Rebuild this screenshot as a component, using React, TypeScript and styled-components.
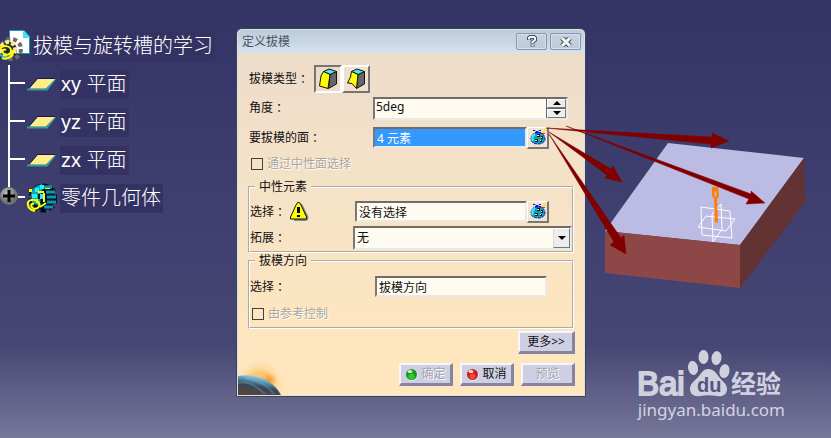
import React from "react";
import styled, { createGlobalStyle, css } from "styled-components";

const GlobalStyle = createGlobalStyle`
  *, *::before, *::after { box-sizing: border-box; }
  body {
    margin: 0;
    font-family: "Noto Sans", "Noto Sans CJK SC", sans-serif;
    font-size: 12px;
    line-height: 16px;
    color: #111;
  }
  button, input, select { font: inherit; color: inherit; margin: 0; }
`;

const Page = styled.main`
  display: grid;
  grid-template-columns: 236px minmax(320px, 350px) minmax(245px, 1fr);
  align-items: start;
  min-height: 100vh;
  overflow: hidden;
  background: linear-gradient(#333366 0%, #424272 60%, #474774 79%, #77779a 100%);
`;

/* ---------- specification tree ---------- */

const Tree = styled.ul`
  list-style: none;
  margin: 0;
  padding: 27px 0 0;
  color: #fff;
  font: 20px/29px "Liberation Sans", "Noto Sans CJK SC", sans-serif;
`;

const TreeRow = styled.li`
  display: flex;
  align-items: center;
  height: 38px;
`;

const TreeLabel = styled.span<{ $root?: boolean }>`
  margin-left: ${(p) => (p.$root ? 2 : 3)}px;
  padding: 0 2px 0 1px;
  border-radius: 2px;
  background: #343263;
  font-weight: 300;
  white-space: nowrap;
`;

const Branch = styled.span`
  display: flex;
  align-items: center;
  flex: none;
  width: 17px;
  height: 38px;
  margin: 0 2px 0 8px;
  border-left: 2px solid #fff;
  &::before {
    content: "";
    width: 100%;
    height: 2px;
    margin-bottom: 3px;
    background: #fff;
  }
`;

const Expander = styled.button`
  display: flex;
  flex-direction: column;
  align-items: center;
  flex: none;
  width: 18px;
  height: 38px;
  padding: 0;
  border: 0;
  background: none;
  &::before {
    content: "";
    width: 2px;
    height: 8px;
    background: #fff;
  }
`;

const ShortStub = styled.span`
  flex: none;
  width: 7px;
  height: 2px;
  margin: 0 1px 3px 0;
  background: #fff;
`;

/* ---------- dialog ---------- */

const Dialog = styled.section`
  margin-top: 28px;
  border: 1px solid #3f444c;
  border-radius: 6px 6px 0 0;
  background: #d6e3ef;
  padding: 1px;
`;

const TitleBar = styled.header`
  display: flex;
  align-items: center;
  height: 23px;
  padding: 0 3px 0 4px;
  gap: 3px;
  border-radius: 5px 5px 0 0;
  background: linear-gradient(#bccbdb, #d5e2ee);
`;

const Title = styled.h1`
  flex: 1;
  margin: 0;
  font-size: 12px;
  font-weight: 400;
  color: #4c545e;
`;

const CaptionButton = styled.button`
  display: grid;
  place-items: center;
  width: 31px;
  height: 17px;
  padding: 0;
  border: 1px solid #8796ab;
  border-radius: 2px;
  background: linear-gradient(#c5d2e1, #bccada);
  box-shadow: inset 0 0 0 1px #d3dfea;
`;

const Body = styled.form`
  padding: 12px 0 0;
  background: linear-gradient(#eedccb 0%, #f4e2c8 35%, #fce5c0 75%, #ffe6bd 100%);
`;

const Row = styled.div<{ $h: number; $inset?: boolean }>`
  display: flex;
  align-items: center;
  height: ${(p) => p.$h}px;
  padding: 0 ${(p) => (p.$inset ? 0 : 10)}px 0 ${(p) => (p.$inset ? 0 : 11)}px;
`;

const Caption = styled.label<{ $w: number }>`
  flex: none;
  display: flex;
  align-items: center;
  width: ${(p) => p.$w}px;
  white-space: nowrap;
  svg { margin-left: 4px; }
`;

const Colon = styled.span`
  font-family: "Noto Sans CJK TC", sans-serif;
`;

const TypeButton = styled.button<{ $on?: boolean }>`
  display: grid;
  place-items: center;
  width: 28px;
  height: 28px;
  padding: 0;
  border: 2px solid;
  border-color: ${(p) => (p.$on ? "#77736e #fff #fff #77736e" : "#fff #77736e #77736e #fff")};
  background: ${(p) => (p.$on ? "#ecdccb" : "#f0e0d0")};
`;

const sunken = css`
  border: 2px solid;
  border-color: #6f6d6b #ece9e4 #ece9e4 #7a7876;
  border-radius: 0;
  background: #fffbf0;
  outline: 0;
`;

const TextField = styled.input<{ $picked?: boolean }>`
  ${sunken}
  width: 154px;
  height: 21px;
  padding: 0 0 0 2px;
  ${(p) => p.$picked && css`background: #3399ff; color: #fff;`}
`;

const WideField = styled(TextField)`
  width: 172px;
`;

const Spin = styled.div`
  ${sunken}
  display: flex;
  width: 195px;
  height: 23px;
  input {
    flex: 1;
    min-width: 0;
    padding: 0 0 2px 1px;
    border: 0;
    outline: 0;
    background: none;
    font-size: 12px;
  }
`;

const SpinButtons = styled.div`
  display: grid;
  grid-template-rows: 1fr 1fr;
  gap: 1px;
  width: 20px;
  padding-left: 1px;
  background: #666;
`;

const Bevel = styled.button`
  display: grid;
  place-items: center;
  padding: 0;
  border: 1px solid;
  border-color: #fff #777 #777 #fff;
  background: #ededed;
`;

const PickButton = styled(Bevel)`
  flex: none;
  width: 22px;
  height: 22px;
  border-width: 1px 2px 2px 1px;
  background: #f1e4d0;
`;

const Tick = styled.label`
  display: flex;
  align-items: center;
  gap: 4px;
  padding-left: 2px;
  color: #aaa59b;
  text-shadow: 1px 1px 0 #fff;
  input {
    appearance: none;
    width: 12px;
    height: 12px;
    border: 1px solid #45423e;
    background: transparent;
  }
`;

const Group = styled.fieldset`
  min-width: 0;
  margin: 0 10px;
  padding: 4px 0 0;
  border: 2px groove #fff;
  legend {
    margin-left: 5px;
    padding: 0 4px;
  }
  div + & { margin-top: 4px; }
`;

const Combo = styled.div`
  ${sunken}
  display: grid;
  flex: 1;
  height: 24px;
  select, span { grid-area: 1 / 1; }
  select {
    appearance: none;
    border: 0;
    outline: 0;
    border-radius: 0;
    padding: 0 2px;
    background: none;
  }
`;

const ComboArrow = styled.span`
  display: grid;
  place-items: center;
  justify-self: end;
  width: 17px;
  border: 1px solid;
  border-color: #fff #777 #777 #ddd;
  background: #ededed;
  pointer-events: none;
`;

const Footer = styled.footer`
  display: flex;
  justify-content: space-between;
  align-items: flex-end;
  padding-top: 2px;
`;

const Actions = styled.div`
  display: flex;
  flex-direction: column;
  align-items: flex-end;
  gap: 9px;
  padding: 0 9px 9px 0;
`;

const ActionRow = styled.div`
  display: flex;
  gap: 7px;
`;

const ActionButton = styled.button<{ $wide?: boolean }>`
  display: flex;
  align-items: center;
  justify-content: center;
  gap: 3px;
  width: ${(p) => (p.$wide ? 57 : 54)}px;
  height: 23px;
  padding: 0;
  border: solid;
  border-width: 2px 3px 3px 2px;
  border-color: #f6f6fc #85859f #85859f #f6f6fc;
  background: #cfcfe3;
  white-space: nowrap;
  &:disabled {
    color: #a3a3b0;
    text-shadow: 1px 1px 0 #fff;
  }
`;

/* ---------- viewport ---------- */

const Viewport = styled.section`
  display: flex;
  flex-direction: column;
  justify-content: space-between;
  min-height: 100vh;
  padding: 120px 0 18px;
`;

const Model = styled.svg`
  position: relative;
  z-index: 1;
  display: block;
  overflow: visible;
  pointer-events: none;
`;

const Brand = styled.a`
  display: block;
  align-self: flex-end;
  margin-right: 46px;
  color: #d3d3e1;
  font: 17px/21px "Noto Sans", sans-serif;
  text-decoration: none;
  svg { display: block; overflow: visible; }
`;

const PartIcon = () => (
  <svg width="30" height="32" viewBox="0 0 30 32">
    <path d="M9.500 0.500H24l5.500 6V23.500H9.500z" fill="#fff" stroke="#0f9ca8" />
    <path d="M23 1v7h7l-3-4z" fill="#3fe0f0" />
    <circle cx="9" cy="20" r="8" fill="#1b1f2c" />
    <circle cx="11" cy="19" r="10" fill="none" stroke="#6f6a66" strokeWidth="4" strokeDasharray="4 3" />
    <circle cx="8" cy="19" r="7" fill="#1a2b3c" stroke="#ffe68a" strokeWidth="4" strokeDasharray="4 2" />
    <path d="M0 24c3 5 9 4 12 0" fill="none" stroke="#18b8c0" strokeWidth="2" />
    <path d="M0 19c2-4 10-4 11 1s-6 6-8 3 1-4 3-3M13 20c1 7-6 10-11 8" fill="none" stroke="#ff0" strokeWidth="2" />
  </svg>
);

const PlaneIcon = () => (
  <svg width="30" height="13" viewBox="0 0 30 13">
    <path d="M0 11.500H20L28 1" fill="none" stroke="#2ba0a8" strokeWidth="2" />
    <path d="M2 10.500 10.500 1H28L19 10.500z" fill="#ffee88" />
    <path d="M2 10.500 10.500 0.500H28" fill="none" stroke="#1d1646" />
  </svg>
);

const BodyIcon = () => (
  <svg width="31" height="32" viewBox="0 0 31 32">
    <circle cx="17" cy="16" r="12" fill="#061033" />
    <circle cx="17" cy="16" r="12" fill="none" stroke="#020a20" strokeWidth="5" strokeDasharray="5 3" />
    <path d="M18 5h8M20 10h9M21 15h9M21 20h9M18 25h9" stroke="#0b9aa6" strokeWidth="3" />
    <path d="M5 12c2-8 9-11 14-8l-4 6-1 14-8-3z" fill="#0fa8b0" />
    <path d="M9 6h4v4H9zM14 3h4v4h-4zM6 12h5v4H6zM14 12h3v5h-3z" fill="#20f0ff" />
    <path d="M3 7h3v3H3zM12 9h6v2h-6zM17 11h2v9h-2zM10 17h2v4h-2zM19 6h5v1h-5z" fill="#ff0" />
    <path d="M12 12h2v5h-2z" fill="#061033" />
    <path d="M2 20c2-3 9-3 11 1s-3 7-6 5-2-5 1-4M2 20c-1 5 2 8 7 9M14 25l6-4" fill="none" stroke="#ff0" strokeWidth="2" />
  </svg>
);

const PlusBall = () => (
  <svg width="18" height="18" viewBox="0 0 18 18">
    <defs>
      <radialGradient id="ball" cx="40%" cy="35%">
        <stop offset="0" stopColor="#c8c8c8" />
        <stop offset="1" stopColor="#6f6f70" />
      </radialGradient>
    </defs>
    <circle cx="9" cy="9" r="9" fill="url(#ball)" />
    <path d="M9 3v12M3 9h12" stroke="#000" strokeWidth="3" />
  </svg>
);

const DraftIcon = ({ open }: { open?: boolean }) => (
  <svg width="20" height="22" viewBox="0 0 20 22">
    <path d="M12 6.500 18.500 3.500V16L10.500 20.500z" fill="#666" stroke="#111" />
    <path d="M5.500 3.500 11 1l7.500 2.500L12 6.500z" fill="#4fe6f2" stroke="#111" />
    {open ? (
      <path d="M5.500 3.500 12 6.500 10.500 20.500 6 15.500 1.500 15 4.500 9z" fill="#ff0" stroke="#111" />
    ) : (
      <path d="M5.500 3.500 12 6.500 10 20.500 1.500 18 3 8z" fill="#ff0" stroke="#111" />
    )}
  </svg>
);

const BagIcon = () => (
  <svg width="16" height="16" viewBox="0 0 16 16">
    <path d="M5 4h6c2 1 4 3 4 6 0 3-3 5-7 5s-7-2-7-5c0-3 2-5 4-6z" fill="#0fa3ad" stroke="#0a12d8" strokeDasharray="3 1" />
    <path d="M3 1.500h2l1 1h2l1-1h2M5 3.500h6" fill="none" stroke="#0a12d8" />
    <path d="M5 5c-3 2-3 5-2 7" fill="none" stroke="#35f0ff" strokeWidth="2" />
    <path d="M7 5h3v3H7zM11 7h2v3h-2zM5 10h3v3H5zM10 11h2v2h-2z" fill="#08103a" />
    <path d="M7 6h2v1H7zM11 8h1v1h-1zM5 11h2v1H5zM10 11h1v1h-1z" fill="#fff29a" />
    <path d="M12 3.500h2M14 1.500h2" stroke="#ffe000" strokeWidth="2" fill="none" />
    <path d="M12 4.500h3" stroke="#e03010" />
  </svg>
);

const WarnIcon = () => (
  <svg width="19" height="19" viewBox="0 0 19 19">
    <path d="M9.500 2c2 0 2 1 3 3l5 10c0 2 0 3-2 3H4" fill="none" stroke="#888" strokeWidth="2" />
    <path d="M7.500 0.500h2L11 3l5.500 12v2h-16v-2L6 3z" fill="#ff0" stroke="#111" />
    <path d="M8.500 5v6M8.500 13v2" stroke="#000" strokeWidth="3" />
  </svg>
);

const Lamp = ({ tone }: { tone: "green" | "red" }) => (
  <svg width="13" height="13" viewBox="0 0 13 13">
    <circle cx="7" cy="7" r="6" fill="#fff" opacity="0.600" />
    <circle cx="6.500" cy="6.500" r="5.500" fill={tone === "green" ? "#159a18" : "#c9201c"} />
    <circle cx="6.500" cy="8.500" r="3" fill={tone === "green" ? "#35c737" : "#f04840"} />
    <ellipse cx="5" cy="3.500" rx="2.500" ry="1.500" fill="#f4dcd8" />
  </svg>
);

const Triangle = ({ down }: { down?: boolean }) => (
  <svg width="8" height="4" viewBox="0 0 8 4">
    <path d={down ? "M0 0h8L4 4z" : "M0 4h8L4 0z"} fill="#000" />
  </svg>
);

const Planet = () => (
  <svg width="52" height="36" viewBox="0 0 52 36">
    <defs>
      <radialGradient id="glow" cx="22" cy="26" r="26" gradientUnits="userSpaceOnUse">
        <stop offset="0" stopColor="#fbb350" />
        <stop offset="0.500" stopColor="#fbcb78" />
        <stop offset="1" stopColor="#ffe6bd" stopOpacity="0" />
      </radialGradient>
      <radialGradient id="flare">
        <stop offset="0" stopColor="#ff8c2c" />
        <stop offset="1" stopColor="#ffa64c" stopOpacity="0" />
      </radialGradient>
      <linearGradient id="globe" x1="0.700" y1="0.100" x2="0.350" y2="0.900">
        <stop offset="0" stopColor="#b9e2ee" />
        <stop offset="0.300" stopColor="#5b9cbc" />
        <stop offset="0.600" stopColor="#30495c" />
        <stop offset="1" stopColor="#55443f" />
      </linearGradient>
    </defs>
    <rect width="52" height="36" fill="url(#glow)" />
    <circle cx="31" cy="21" r="8" fill="url(#flare)" />
    <path d="M0 17C18 14 34 20 43 36H0z" fill="url(#globe)" />
    <path d="M0 24c10-2 20 4 27 11M8 19c12 2 22 8 28 16" fill="none" stroke="#9aaeb4" strokeWidth="2" opacity="0.300" />
  </svg>
);

const BaiduLogo = () => (
  <svg width="147" height="49" viewBox="638 349 147 49" role="img" aria-label="Baidu 经验">
    <g fill="#d0d0df">
      <text x="637" y="394" fontFamily="Liberation Sans" fontSize="33" stroke="#d0d0df" strokeWidth="2">Bai</text>
      <ellipse cx="693" cy="367" rx="5" ry="7" transform="rotate(-10 693 367)" />
      <ellipse cx="703.500" cy="356" rx="5" ry="7" />
      <ellipse cx="716.500" cy="357" rx="5" ry="7" transform="rotate(8 716 357)" />
      <ellipse cx="724.500" cy="370" rx="5" ry="7" transform="rotate(12 724 370)" />
      <path d="M708 368c6 0 8 4 11 8 4 5 8 7 8 12 0 6-5 8-10 7-6-1-11-1-17 0-6 1-10-2-10-7 0-6 5-8 9-13 3-4 5-7 9-7z" />
      <text x="731" y="392" fontFamily="Noto Sans CJK SC" fontWeight="700" fontSize="25">经验</text>
    </g>
    <text x="697" y="391" fontFamily="Liberation Sans" fontWeight="700" fontSize="20" fill="#55557f">du</text>
  </svg>
);

const planes = ["xy 平面", "yz 平面", "zx 平面"];

const arrows = [
  "M546 128 712 137V133L729 141 711 148V144z",
  "M566 126 751 194V191L765 203 746 204 749 199z",
  "M549 132 611 169 613 166 622 182 605 178 607 175z",
  "M549 134 621 238 624 235 626 254 610 245 614 242z",
];

export default function App() {
  return (
    <>
      <GlobalStyle />
      <Page>
        <Tree>
          <TreeRow>
            <PartIcon />
            <TreeLabel $root>拔模与旋转槽的学习</TreeLabel>
          </TreeRow>
          {planes.map((name) => (
            <TreeRow key={name}>
              <Branch />
              <PlaneIcon />
              <TreeLabel>{name}</TreeLabel>
            </TreeRow>
          ))}
          <TreeRow>
            <Expander type="button" aria-label="展开 零件几何体"><PlusBall /></Expander>
            <ShortStub />
            <BodyIcon />
            <TreeLabel>零件几何体</TreeLabel>
          </TreeRow>
        </Tree>

        <Dialog role="dialog" aria-labelledby="dialog-title">
          <TitleBar>
            <Title id="dialog-title">定义拔模</Title>
            <CaptionButton type="button" aria-label="帮助">
              <svg width="10" height="13" viewBox="0 0 10 13" fill="none">
                <path d="M2 5V3l1-1h4l1 1v2L5.500 7v1.500M5.500 9.500v2" stroke="#454e5c" strokeWidth="4" />
                <path d="M2 4.500V3l1-1h4l1 1v2L5.500 7v1M5.500 9.500v1.500" stroke="#f4f6f8" strokeWidth="2" />
              </svg>
            </CaptionButton>
            <CaptionButton type="button" aria-label="关闭">
              <svg width="12" height="10" viewBox="0 0 12 10">
                <path d="M2 1 10 9M10 1 2 9" stroke="#454e5c" strokeWidth="5" />
                <path d="M2 1 10 9M10 1 2 9" stroke="#f4f6f8" strokeWidth="3" />
              </svg>
            </CaptionButton>
          </TitleBar>
          <Body onSubmit={(e) => e.preventDefault()}>
            <Row $h={28}>
              <Caption as="span" $w={65}>拔模类型<Colon>：</Colon></Caption>
              <TypeButton type="button" $on aria-pressed="true" aria-label="恒定角度拔模"><DraftIcon /></TypeButton>
              <TypeButton type="button" aria-pressed="false" aria-label="可变角度拔模"><DraftIcon open /></TypeButton>
            </Row>
            <Row $h={30}>
              <Caption $w={124} htmlFor="angle">角度<Colon>：</Colon></Caption>
              <Spin>
                <input id="angle" defaultValue="5deg" />
                <SpinButtons>
                  <Bevel type="button" aria-label="增加"><Triangle /></Bevel>
                  <Bevel type="button" aria-label="减少"><Triangle down /></Bevel>
                </SpinButtons>
              </Spin>
            </Row>
            <Row $h={29}>
              <Caption $w={124} htmlFor="faces">要拔模的面<Colon>：</Colon></Caption>
              <TextField id="faces" $picked readOnly value="4 元素" />
              <PickButton type="button" aria-label="编辑面元素"><BagIcon /></PickButton>
            </Row>
            <Row $h={23}>
              <Tick><input type="checkbox" disabled />通过中性面选择</Tick>
            </Row>
            <Group>
              <legend>中性元素</legend>
              <Row $h={25} $inset>
                <Caption $w={105} htmlFor="neutral">选择<Colon>：</Colon><WarnIcon /></Caption>
                <WideField id="neutral" readOnly value="没有选择" />
                <PickButton type="button" aria-label="编辑中性元素"><BagIcon /></PickButton>
              </Row>
              <Row $h={27} $inset>
                <Caption $w={103} htmlFor="spread">拓展<Colon>：</Colon></Caption>
                <Combo>
                  <select id="spread" defaultValue="无"><option>无</option></select>
                  <ComboArrow><Triangle down /></ComboArrow>
                </Combo>
              </Row>
            </Group>
            <Group>
              <legend>拔模方向</legend>
              <Row $h={27} $inset>
                <Caption $w={125} htmlFor="direction">选择<Colon>：</Colon></Caption>
                <WideField id="direction" readOnly value="拔模方向" />
              </Row>
              <Row $h={27} $inset>
                <Tick><input type="checkbox" disabled />由参考控制</Tick>
              </Row>
            </Group>
            <Footer>
              <Planet />
              <Actions>
                <ActionButton type="button" $wide>更多&gt;&gt;</ActionButton>
                <ActionRow>
                  <ActionButton type="submit" disabled><Lamp tone="green" />确定</ActionButton>
                  <ActionButton type="button"><Lamp tone="red" />取消</ActionButton>
                  <ActionButton type="button" disabled>预览</ActionButton>
                </ActionRow>
              </Actions>
            </Footer>
          </Body>
        </Dialog>

        <Viewport>
          <Model width="245" height="170" viewBox="586 120 245 170">
            <path d="M668 143 804 158 740 245 605 231z" fill="#bbbbe3" />
            <path d="M605 231 740 245V288L605 273z" fill="#8d4747" />
            <path d="M740 245 804 158 805 202 740 288z" fill="#633232" />
            <g fill="none" stroke="#fff">
              <path d="M701 207 730 211 732 238 702 235z" />
              <path d="M698 227 706 216 735 219 726 231z" />
              <path d="M721 204 722 229 713 242 712 214z" />
            </g>
            <path d="M716.500 222.500 715.500 198" stroke="#ff8000" strokeWidth="3" />
            <path d="M712 187h6l1 9-2 3h-3l-2-3z" fill="#ff8000" />
            <ellipse cx="715.500" cy="194" rx="1" ry="3" fill="#bbbbe3" />
            {arrows.map((d) => (
              <path key={d} d={d} fill="#800000" stroke="#800000" strokeWidth="0.500" />
            ))}
          </Model>
          <Brand href="#jingyan">
            <BaiduLogo />
            jingyan.baidu.com
          </Brand>
        </Viewport>
      </Page>
    </>
  );
}
